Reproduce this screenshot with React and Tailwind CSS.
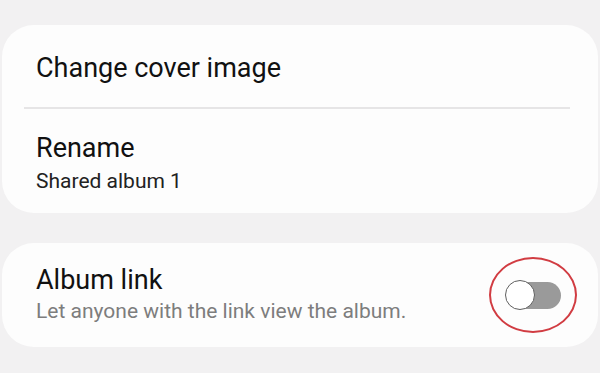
import React, { useState } from 'react';

const Toggle = ({ on, onChange }) => (
  <button
    type="button"
    onClick={() => onChange(!on)}
    className="relative flex items-center justify-center w-[88px] h-[76px] rounded-[50%] border-[2.5px] border-[#d13c42]"
  >
    <span className="relative block w-[56px] h-[30px]">
      <span className="absolute left-[9px] top-[2px] w-[47px] h-[27px] rounded-full bg-[#9a9a9a]" />
      <span
        className={
          on
            ? 'absolute left-[26px] top-0 w-[30px] h-[30px] rounded-full bg-white border-[1.5px] border-[#5f5f5f]'
            : 'absolute left-0 top-0 w-[30px] h-[30px] rounded-full bg-white border-[1.5px] border-[#5f5f5f]'
        }
      />
    </span>
  </button>
);

const App = () => {
  const [linkOn, setLinkOn] = useState(false);

  return (
    <div
      className="w-[600px] h-[373px] overflow-hidden bg-[#f2f1f2] pt-[25px] px-[2px]"
      style={{ fontFamily: 'Roboto, "Noto Sans", sans-serif' }}
    >
      <div className="h-[188px] rounded-[32px] bg-[#fdfdfd]">
        <div className="h-[82px] pt-[28px] px-[34px]">
          <p className="text-[27px] leading-[30px] text-[#111]">Change cover image</p>
        </div>
        <div className="ml-[22px] mr-[28px] h-[2px] bg-[#e6e5e6]" />
        <div className="pt-[24px] px-[34px]">
          <p className="text-[27px] leading-[30px] text-[#111]">Rename</p>
          <p className="mt-[6px] text-[21px] leading-[24px] text-[#222]">Shared album 1</p>
        </div>
      </div>

      <div className="mt-[30px] h-[104px] rounded-[32px] bg-[#fdfdfd] flex items-center justify-between pl-[34px] pr-[21px]">
        <div className="pb-[2px]">
          <p className="text-[27px] leading-[30px] text-[#111]">Album link</p>
          <p className="mt-[4px] text-[21px] leading-[24px] text-[#7d7d7d]">
            Let anyone with the link view the album.
          </p>
        </div>
        <Toggle on={linkOn} onChange={setLinkOn} />
      </div>
    </div>
  );
};

export default App;
